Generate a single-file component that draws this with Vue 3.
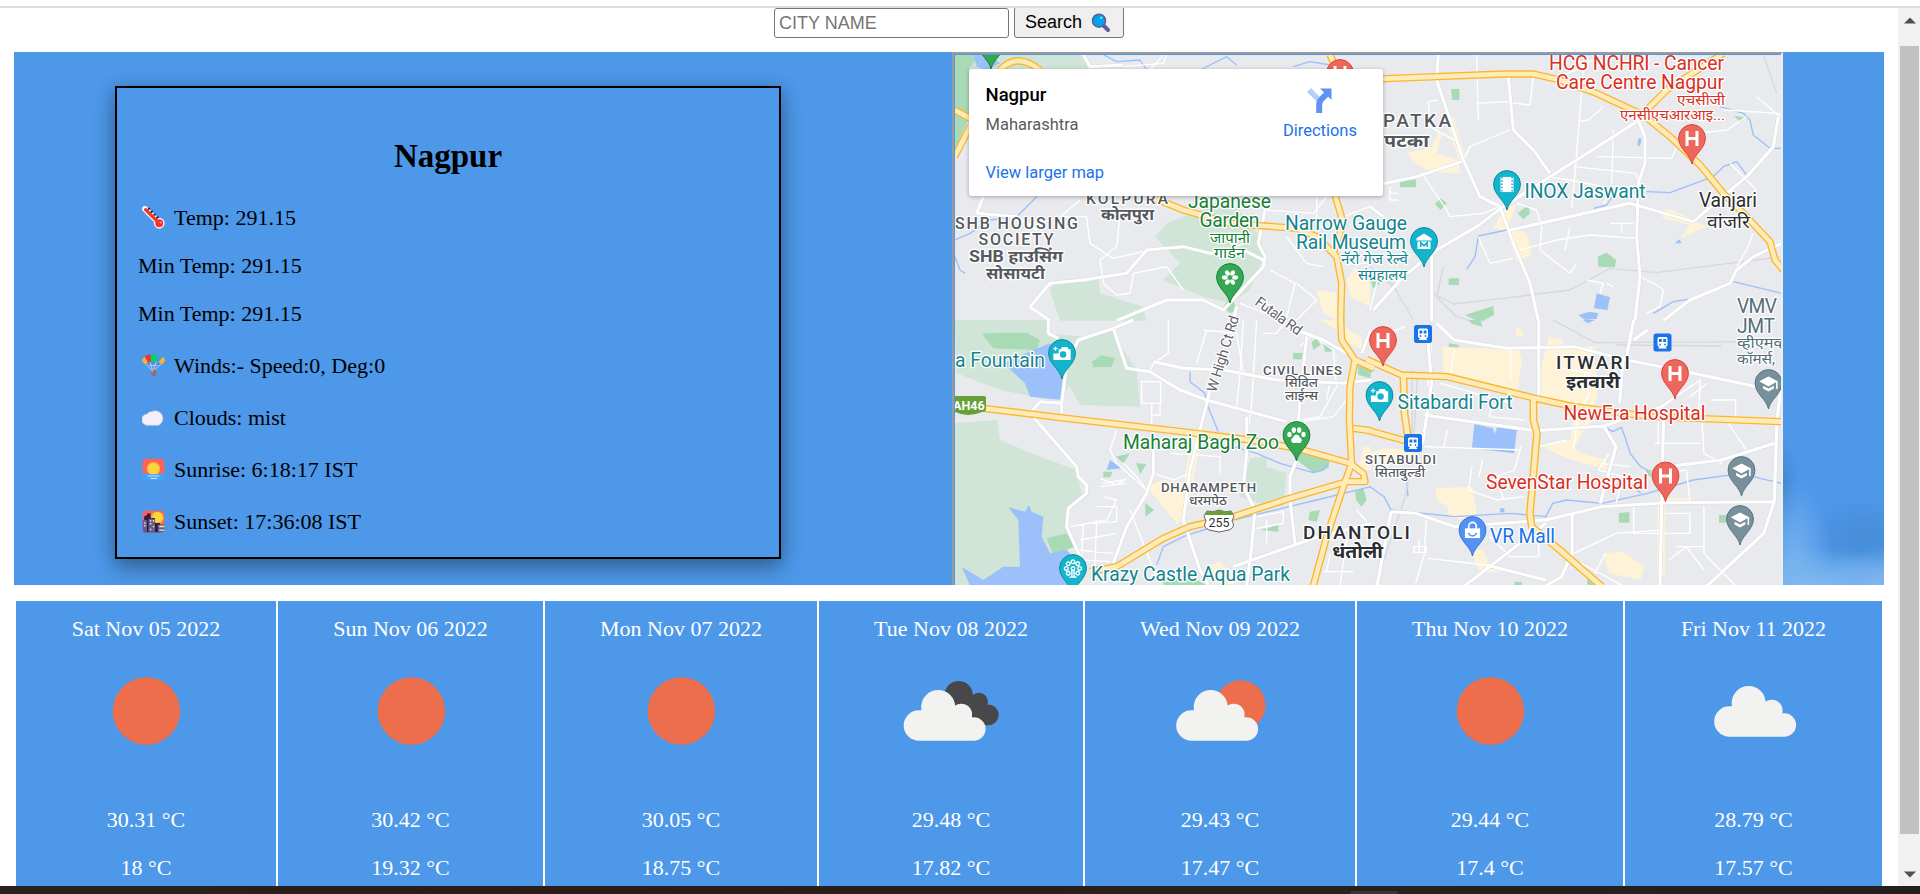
<script setup>
const days = [
  { date: 'Sat Nov 05 2022', icon: 'sun', max: '30.31', min: '18' },
  { date: 'Sun Nov 06 2022', icon: 'sun', max: '30.42', min: '19.32' },
  { date: 'Mon Nov 07 2022', icon: 'sun', max: '30.05', min: '18.75' },
  { date: 'Tue Nov 08 2022', icon: 'broken', max: '29.48', min: '17.82' },
  { date: 'Wed Nov 09 2022', icon: 'partly', max: '29.43', min: '17.47' },
  { date: 'Thu Nov 10 2022', icon: 'sun', max: '29.44', min: '17.4' },
  { date: 'Fri Nov 11 2022', icon: 'cloud', max: '28.79', min: '17.57' },
]

const disc = (x, y, r) => `M${x - r} ${y}a${r} ${r} 0 1 1 ${2 * r} 0a${r} ${r} 0 1 1 ${-2 * r} 0Z`
const cloudPath = disc(18, 64.5, 15.3) + disc(37.2, 46, 17) + disc(60.3, 53.5, 10.8) + disc(72.8, 68, 11.8) + 'M18 50L30 45 60 45 75 60V79.8H18Z'
const darkPath = disc(57.7, 34, 14) + disc(78, 40.8, 9) + disc(87.3, 53.8, 10.4) + 'M50 40L65 25 82 45 88 64 75 62Z'

/* Each map tile keeps its own local coordinates. */
const tiles = [
  {
    t: 'translate(950 50) scale(.33333)',
    park: 'M14 14H405L415 60H60V210L14 320ZM615 560L650 520 750 480 860 470 930 560 940 620 900 720 840 760 760 740 640 690 690 640ZM300 720L320 690 445 685 450 730 580 770 588 812H330Z',
    dark: 'M14 14H90L57 57V200L14 300ZM820 770L845 735 860 780 840 790Z',
    built: 'M1100 720L1160 730 1160 810 1120 790ZM1190 690L1215 650 1260 700V770L1200 740Z',
    water: 'M70 14H120L150 40 110 60 80 50Z',
    stream: 'M15 570L60 550 120 510 200 500 260 440M15 620L30 660 45 670M460 14L500 35 570 30 590 60M750 60L830 20 860 45M1030 50L1080 35 1140 45',
    rail: '',
    minor: 'M490 440L510 500 500 590 450 630 460 700 500 735 540 730 550 670 650 650 700 720M410 500L420 580 490 625 600 600M840 600L880 580 880 560M960 660L1035 700 1010 800M945 480L1090 490 1130 440M1010 560L1070 640 1120 650M520 50L640 40 650 14M600 60L640 14M1100 440V530L1180 535M1180 500L1260 470M1190 640L1260 640M390 450L330 500 410 500M1040 700L1100 750 1040 810M870 760L1000 810',
    road: 'M80 490L100 440M80 490L200 500 260 540M240 770L300 700 400 690 530 670 590 600 700 590 780 610 880 600 940 630M240 770L300 812M500 812L650 750 760 750 820 780 940 650 945 620 925 580 945 480 940 440M400 14L420 50 520 45M860 770L850 812',
    high: 'M14 180L60 205M14 320L60 230M150 60Q200 5 270 60M600 440L700 480 840 520 1040 535 1100 560 1160 620 1175 700 1172 816M1155 435L1180 520 1150 610M1140 14L1160 60',
  },
  {
    t: 'translate(1370 50) scale(.33333)',
    park: '',
    dark: 'M243 117H268V150H247ZM90 392L138 388V412H90ZM195 462L212 445 230 460 212 480ZM443 490L475 465 480 490 460 508ZM683 620L710 608 738 630 735 652 685 650ZM236 685H267V705H236ZM285 795L370 768 372 795 340 812H320ZM1092 197L1130 203 1110 217ZM0 690L20 690 30 700 10 715Z',
    built: 'M112 310L185 290 205 245 215 255 200 310 265 330 270 370 180 365 130 335ZM370 535L400 480 440 460 415 530 470 550 485 615 440 635 412 545ZM865 480L905 478 1010 530 990 540 930 565 960 525 880 505ZM228 210L250 200 290 330 270 340Z',
    water: 'M680 730L720 742 712 780 672 775ZM625 795L660 785 685 790 680 806 645 810ZM805 265L815 267 810 288 802 285ZM915 580L928 568 935 580Z',
    stream: 'M1050 170L1120 190 1140 210 1150 255 1200 295H1235M1200 295L1170 335M830 425L900 428 1030 380 1060 350 1100 335 1130 375M325 558L410 540M325 560L315 620 290 658M1090 695L1235 730M850 790L910 755 970 745M670 475L710 465 730 435',
    rail: 'M190 730L250 762 400 745 600 720 720 655 860 668 1235 620M220 650L200 740 260 800 300 812M60 690L130 810M1180 14L1220 130M0 650L80 720',
    minor: 'M320 14L325 210M320 160L400 155 480 165 490 80M540 90L620 60 690 14M640 60L620 310 605 475M625 215L655 210 700 170M680 320L905 325 920 290M730 240L725 400M610 350L800 370 805 400M155 370L230 480 240 500 340 490 390 470M205 150L175 155 180 230 270 280M280 330L300 290 420 240M530 380L600 390 700 410M440 460L500 480 515 530 510 600 600 670 620 640M700 460L720 430 830 440M720 520H790M755 520V550M450 600L560 570 660 555 800 565M325 560L360 640 430 625M60 410V450H85M60 430H85M600 530L585 600M1060 180L1230 190M1160 140L1230 200M1080 340L1160 420M980 250L1070 240 1130 200M810 680L860 705 880 720 870 770 830 790M650 690L700 700 690 730M730 710L710 700M1100 650L1130 600 1150 550M30 660L0 780',
    road: 'M205 14L200 90 240 210 280 330 330 440 390 470 430 580 480 700 505 812M-10 412L140 380 275 335M415 80L430 240 490 300 540 370M400 470L540 380 800 215M400 470L320 530 200 600 100 680 10 780M800 200L825 260 825 340 805 400 800 560 810 680 795 812M420 540L780 460 970 515 1130 380 1210 290 1225 200M1235 580L1150 620 1100 660 1080 700 960 750 880 812M185 600V812M0 470L40 500',
    high: 'M-10 88L200 80 400 72 490 72 570 90 680 130 820 195 900 260 990 345 1060 430 1120 490 1200 575 1215 630 1240 660M830 180L890 120 1060 10',
  },
  {
    t: 'translate(950 320) scale(.33333)',
    park: 'M14 0H300L290 40 400 50 490 20 520 90 560 150 570 260 390 255 360 200 300 240 150 210 20 160ZM14 310L140 300 150 360 270 410 380 450 390 500 400 530 350 570 350 700 330 795H14ZM900 415L950 410 950 440 1010 460 1000 560 930 550 870 530Z',
    dark: 'M95 40L230 38 270 60 260 90 130 85ZM425 125L455 105 495 115 485 140 430 142ZM290 655L350 640 375 680 310 705ZM1040 420L1060 385 1140 410 1135 445 1090 458ZM1222 120H1262V175L1225 165ZM498 410L540 400 520 430ZM558 430L590 432 570 462ZM585 548L612 570 587 590ZM460 455H488L480 472H460ZM930 630L985 615V635ZM1080 575L1110 570 1100 605 1075 600ZM1215 515L1240 505 1250 540 1235 560 1218 540ZM1085 65L1100 55 1112 75 1090 90ZM1120 70L1142 65 1145 95 1125 95ZM1028 100L1058 98 1055 118H1030ZM640 785L720 770 770 795H640Z',
    built: 'M590 500L640 480 700 490 720 380 735 330 745 400 725 510 700 600 680 610ZM1110 0H1160V30ZM1180 20L1235 50V90L1180 60ZM780 735L810 725 830 745 870 760 850 795 780 780ZM1240 380H1262V450H1225Z',
    water: 'M160 130L250 90 300 70 350 170 335 240 240 230 225 190ZM175 562L225 575 237 555 245 575 280 590 275 650 300 700 350 690 400 740 370 797H60L35 740 100 780 160 740 210 740 205 600ZM480 420L515 445 470 450Z',
    stream: 'M720 155V185L765 220 770 250 805 335M850 380L920 400 990 430 1090 458 1120 450 1135 430M1262 500L1100 540 850 600 700 650 640 680 620 735',
    rail: '',
    minor: 'M500 330L480 390 500 430 590 510M590 510L560 470 520 430M610 460L670 480 720 460M660 400L810 410V460M540 570L615 760M575 185H632V250H575ZM605 250V330M630 250V285H605M655 0V100L610 130 600 155M770 30L740 130M760 30L860 40 880 160M880 0L870 160 860 260M920 0L905 250 885 390M940 40H980L1010 0M360 620L470 600 500 540 460 530M390 660L500 640M380 690L490 700M390 720L480 725M400 610L395 720M440 600L435 735M450 475L500 495 530 475M460 490L520 480M450 500L530 490M1080 40L1150 90 1160 200 1110 290 1020 305M1140 180L1130 240M1080 50L1050 80M1020 310L1150 290 1190 240M920 590L1000 575V610L920 625M950 600V670M1120 755H1210M1140 700L1130 755M1190 660L1170 795M1220 570L1262 620M440 560H500V605L430 610',
    road: 'M240 280L380 440 385 470 410 495 410 520 355 565 350 620 390 710M240 280L270 245 335 250 350 130 385 60 490 25 550 0M335 250V280M490 25L530 145 600 155 690 210 770 240 880 270 1010 305M295 0V40L325 55M780 210L750 330 720 450 700 600 750 750 775 795M610 125L700 145 820 150 980 180 1180 190 1262 180M610 330V460L590 520 530 620 490 730M890 290V400L880 500 915 570 905 680 890 795M1040 420L1020 470V540L1035 670M850 740L1090 655 1262 610M1070 50L1050 240 1045 310M1040 30L1120 60 1190 100M1262 30L1235 100',
    high: 'M100 265L350 295 740 340 900 360 1040 385 1200 430 1240 460 1245 485 1190 485 1020 535 850 590 720 620 640 655 500 740 420 755M1172 -6L1175 60 1215 120 1200 200 1198 300 1205 430 1180 500 1130 650 1090 797M1215 120L1272 145M1210 325L1262 332',
  },
  {
    t: 'translate(1370 320) scale(.3515 .33333)',
    park: '',
    dark: 'M225 70L253 75 248 107 222 102ZM490 195L526 196 522 232 488 228ZM708 579L738 576V608H708ZM993 585H1018V608H993ZM280 0H315L320 20 290 12ZM0 140L15 150 0 160ZM785 450H800V470L785 462ZM410 785H432V797H412ZM618 775L650 797H618Z',
    built: 'M205 80L425 90 432 120 420 215 210 160ZM508 50L550 60 545 80H640V150L655 180 630 300 580 380 600 400 670 420 675 450 560 415 490 380 570 360 580 270 480 230 485 150ZM185 505L290 500 305 580 270 600 225 590 220 560 190 540ZM665 700L720 695 780 740 770 780 680 760ZM285 690L320 690 345 740 400 750 315 760ZM818 560H840V765H818ZM835 535H915V545H835ZM0 400L40 385 130 390 100 430H0ZM415 30L425 20 440 45 415 50Z',
    water: 'M297 312L350 325 355 342 362 320 418 330 410 400 290 385ZM370 565H382V577H370ZM605 0H640L620 10Z',
    stream: 'M0 500L40 530 60 570 240 590 400 580 500 590 520 550 560 540 660 550 790 520 920 480 1060 460 1110 475 1170 490M670 322L690 335 715 322 725 350 740 400 770 440 790 450M105 485L108 530M720 470L770 520',
    rail: 'M120 150V360M135 160L125 350M110 480L100 530 15 797M520 0L640 68 1170 65M700 75L1000 78',
    minor: 'M175 60L165 200M200 190L400 250M345 250L340 290 440 300M240 90L230 160M0 60L100 20M400 90V180M530 140L620 160M630 80L620 230 590 290 580 390M870 230L940 180 935 270M970 240H1040V310M920 290H820V370H830M945 310L950 400 1000 430M1020 310L1070 390M680 400L650 450 720 470 700 550M810 370H940M840 460L900 450 910 540M840 580H910V640H840M750 560V640H830M950 560V700L1040 797M870 680H950M850 720L900 680 950 750M480 630V710H400L340 650M160 600L155 700 130 790M125 680H160V697H125ZM140 660V697M165 715L330 735M290 440L280 510 360 540 440 530M155 380L430 390M320 420L310 470M220 330L210 380M430 380L410 450 360 470 380 540M560 360L480 380M660 430L740 440M580 700L700 640 830 630M600 730L720 797M670 700L640 760M960 190L910 230',
    road: 'M155 285L470 332 665 318 830 260 870 230M190 10L240 60 390 85 580 80 730 120 900 155 1100 200M480 0V230M60 575L130 580 240 620 500 600 660 560 840 548 1150 545 1158 300 1175 150M1150 545L1120 640 960 797M835 300L825 797M665 318L700 380 655 550M270 797L500 610M330 735L500 780M500 797L545 770 575 700V580M750 0L730 110M790 30L750 60M720 110L710 250M840 440L1000 420 1150 370M165 60L175 190 150 370M20 797L60 575',
    high: 'M-10 118L90 165 220 170 470 235 580 260 800 290 1175 305M95 165L98 280 108 350M-10 330L100 362M465 235V300L475 340 455 580 460 620 540 690 660 800',
  },
]

/* [text, x, baseline, width, size, colour class] */
const labels = [
  ['INOX Jaswant', 1524.5, 197.5, 121, 19.3, 'teal'],
  ['Narrow Gauge', 1285, 230, 122, 19.3, 'teal'],
  ['Rail Museum', 1296, 249, 110, 19.3, 'teal'],
  ['नॅरो गेज रेल्वे', 1341, 264, 67, 14.5, 'teal'],
  ['संग्रहालय', 1358, 279.5, 49, 14.5, 'teal'],
  ['a Fountain', 955, 366.5, 90, 19.3, 'teal'],
  ['Krazy Castle Aqua Park', 1091, 581, 199, 19.3, 'teal'],
  ['Sitabardi Fort', 1397.5, 408.5, 115, 19.3, 'teal'],
  ['Japanese', 1188, 208, 83, 19.3, 'green'],
  ['Garden', 1199.5, 227, 60, 19.3, 'green'],
  ['जापानी', 1210, 242.5, 40, 14.5, 'green'],
  ['गार्डन', 1214, 257.5, 31, 14.5, 'green'],
  ['Maharaj Bagh Zoo', 1123, 449, 156, 19.3, 'green'],
  ['HCG NCHRI - Cancer', 1549, 69.5, 175, 19.3, 'red'],
  ['Care Centre Nagpur', 1556, 89, 168, 19.3, 'red'],
  ['एचसीजी', 1677, 104.5, 48, 15, 'red'],
  ['एनसीएचआरआइ...', 1620, 119.5, 105, 15, 'red'],
  ['NewEra Hospital', 1563.5, 419.5, 142, 19.3, 'red'],
  ['SevenStar Hospital', 1486, 489, 162, 19.3, 'red'],
  ['VR Mall', 1490, 542.5, 65, 19.3, 'blue'],
  ['KOLPURA', 1086, 203.5, 82, 15.5, 'area'],
  ['कोलपुरा', 1101, 220, 53, 16, 'area bold'],
  ['SHB HOUSING', 955, 229, 123, 16, 'area'],
  ['SOCIETY', 978.5, 245, 75, 16, 'area'],
  ['SHB हाउसिंग', 969, 261.5, 94, 16, 'area bold'],
  ['सोसायटी', 986, 278.5, 59, 16, 'area bold'],
  ['PATKA', 1383, 127, 68, 19, 'area'],
  ['पटका', 1384, 147, 45, 18, 'area bold'],
  ['Vanjari', 1699, 207, 58, 19.3, 'dark'],
  ['वांजरि', 1707, 227.5, 43, 18, 'dark'],
  ['VMV', 1737, 312.5, 40, 19.3, 'slate'],
  ['JMT', 1737, 333, 38, 19.3, 'slate'],
  ['व्हीएमव्ह', 1737, 348, 50, 15, 'slate'],
  ['कॉमर्स,', 1737, 363.5, 38, 15, 'slate'],
  ['ITWARI', 1556, 369, 74, 19, 'area dark'],
  ['इतवारी', 1566, 388, 54, 18, 'area dark bold'],
  ['CIVIL LINES', 1263, 374.5, 79, 13.2, 'area'],
  ['सिविल', 1285, 387, 33, 12.5, 'area'],
  ['लाईन्स', 1285, 399.5, 33, 12.5, 'area'],
  ['DHARAMPETH', 1161, 492, 95, 13.2, 'area'],
  ['धरमपेठ', 1189, 504.5, 38, 12.5, 'area'],
  ['DHANTOLI', 1303, 538.5, 107, 19, 'area dark'],
  ['धंतोली', 1332, 558, 51, 18, 'area dark bold'],
  ['SITABULDI', 1365, 464, 71, 13.2, 'area'],
  ['सिताबुल्डी', 1375, 476.5, 50, 12.5, 'area'],
]
const isDevanagari = s => /[\u0900-\u097f]/.test(s)

/* x and y are the tip of each marker */
const pins = [
  { x: 991, y: 69, c: '#34a853', e: '#188038', g: '' },
  { x: 1230, y: 303, c: '#34a853', e: '#188038', g: 'flower' },
  { x: 1296.5, y: 461, c: '#34a853', e: '#188038', g: 'paw' },
  { x: 1424, y: 267, c: '#12b5cb', e: '#0d8a9c', g: 'museum' },
  { x: 1507, y: 210, c: '#12b5cb', e: '#0d8a9c', g: 'film' },
  { x: 1062, y: 379, c: '#12b5cb', e: '#0d8a9c', g: 'camera' },
  { x: 1379.5, y: 421, c: '#12b5cb', e: '#0d8a9c', g: 'camera' },
  { x: 1073, y: 594, c: '#12b5cb', e: '#0d8a9c', g: 'wheel' },
  { x: 1340, y: 99, c: '#ee675c', e: '#d9453a', g: 'hospital' },
  { x: 1692, y: 164, c: '#ee675c', e: '#d9453a', g: 'hospital' },
  { x: 1383, y: 366, c: '#ee675c', e: '#d9453a', g: 'hospital' },
  { x: 1675, y: 399, c: '#ee675c', e: '#d9453a', g: 'hospital' },
  { x: 1665.5, y: 501.5, c: '#ee675c', e: '#d9453a', g: 'hospital' },
  { x: 1768.5, y: 409, c: '#78909c', e: '#5c7480', g: 'school' },
  { x: 1741.5, y: 496, c: '#78909c', e: '#5c7480', g: 'school' },
  { x: 1740, y: 545, c: '#78909c', e: '#5c7480', g: 'school' },
  { x: 1472.5, y: 556, c: '#5491f5', e: '#3574dd', g: 'bag' },
]
const stations = [[1423, 334], [1662.5, 342.5], [1413, 443]]
</script>

<template>
  <div class="window">
    <div class="topline"></div>
    <div class="viewport">
      <main class="page">
        <form class="search" @submit.prevent>
          <input type="text" placeholder="CITY NAME" />
          <button type="submit">
            <span>Search</span>
            <svg width="20" height="20" viewBox="0 0 20 20">
              <path d="M12.5 12.5L17 17" stroke="#635994" stroke-width="4" stroke-linecap="round" />
              <circle cx="8" cy="7.7" r="6.5" fill="#00a6ed" stroke="#635994" stroke-width="1.5" />
              <circle cx="10.2" cy="4.8" r="1.1" fill="#aee5ff" />
            </svg>
          </button>
        </form>

        <section class="hero">
          <article class="current">
            <h2>Nagpur</h2>
            <p>
              <svg class="emoji" viewBox="0 0 32 32">
                <path d="M4 4L23 23" stroke="#f4f4f4" stroke-width="8" stroke-linecap="round" />
                <circle cx="24" cy="24" r="7.5" fill="#f4f4f4" />
                <path d="M5 5L22 22" stroke="#f8312f" stroke-width="4.5" stroke-linecap="round" />
                <circle cx="24" cy="24" r="5.5" fill="#f8312f" />
                <path d="M8 5l3-2M12 9l3-2M16 13l3-2M20 17l3-2" stroke="#222" stroke-width="2.2" />
                <circle cx="26" cy="23" r="1.6" fill="#ff8a8a" />
              </svg>
              <span>Temp: 291.15</span>
            </p>
            <p>Min Temp: 291.15</p>
            <p>Min Temp: 291.15</p>
            <p class="wide">
              <svg class="emoji" viewBox="0 0 32 32">
                <path d="M3 12L15 24 29 12M11 10L15 24 20 10M10 16h11" stroke="#d9d6e8" stroke-width="1.1" fill="none" />
                <path d="M0 9Q1 5 4 4L9 10 5 14Q1 13 0 9Z" fill="#ffb02e" />
                <path d="M32 9Q32 5 29 4L23 11 27 14Q31 13 32 9Z" fill="#ffb02e" />
                <path d="M4 4Q8 0 13 1L12 12 8 11Z" fill="#f8312f" />
                <path d="M12 2Q17-1 22 3L20 11Q15 13 12 10Z" fill="#00d26a" />
                <path d="M15 22l4 3-4 3 4 3M13 27h6" stroke="#b55a50" stroke-width="2.3" fill="none" />
              </svg>
              <span>Winds:- Speed:0, Deg:0</span>
            </p>
            <p class="wide">
              <svg class="emoji" viewBox="0 0 32 32">
                <path d="M8 27a8 8 0 0 1-1-16Q9 7.5 14 7.5a9.6 9.6 0 1 1 9 19.5Z" fill="#f4eef8" stroke="#b9b2c9" stroke-width="1" />
              </svg>
              <span>Clouds: mist</span>
            </p>
            <p class="wide">
              <svg class="emoji" viewBox="0 0 32 32">
                <path d="M1 22V5Q1 1 5 1H27Q31 1 31 5V22Z" fill="#ff6159" />
                <path d="M1 22H31V27Q31 31 27 31H5Q1 31 1 27Z" fill="#46a4fb" />
                <circle cx="16" cy="15" r="9.5" fill="#ffb02e" />
                <circle cx="16" cy="15" r="8" fill="#fcd53f" />
                <path d="M1 22.5H31V25H1Z" fill="#46a4fb" />
                <path d="M8 25H24M12 28.5H21" stroke="#c8e8ff" stroke-width="1.4" />
              </svg>
              <span>Sunrise: 6:18:17 IST</span>
            </p>
            <p class="wide">
              <svg class="emoji" viewBox="0 0 32 32">
                <rect x="1" y="1" width="30" height="30" rx="4" fill="#ff6159" />
                <circle cx="21" cy="11" r="9" fill="#ffb02e" />
                <circle cx="22" cy="10" r="7" fill="#fcd53f" />
                <path d="M3 9L7 7V5H12V11H18V18H25V31H3Z" fill="#321b41" />
                <path d="M1 14H7V31H5Q1 31 1 27ZM9 12H18V31H9ZM22 20H31V27Q31 31 27 31H22Z" fill="#635994" />
                <path d="M11 15h2M15 15h2M11 19h2M15 23h2M11 27h2M3 18h2M3 22h2M24 23h7M24 28h7" stroke="#ffee91" stroke-width="2" />
              </svg>
              <span>Sunset: 17:36:08 IST</span>
            </p>
          </article>

          <div class="map">
            <svg class="canvas" viewBox="955 55 825.5 530" width="825.5" height="530">
              <rect x="955" y="55" width="826" height="530" fill="#e8eaed" />
              <g v-for="(t, i) in tiles" :key="'a' + i" :transform="t.t">
                <path :d="t.park" fill="#d0e5d8" />
                <path :d="t.dark" fill="#a8dab5" />
                <path :d="t.built" fill="#fef3d6" />
                <path :d="t.water" fill="#9cc0f9" />
                <path :d="t.stream" class="line stream" />
                <path :d="t.rail" class="line rail" />
                <path :d="t.minor" class="line minor" />
              </g>
              <g v-for="(t, i) in tiles" :key="'b' + i" :transform="t.t">
                <path :d="t.road" class="line road-edge" />
                <path :d="t.road" class="line road" />
              </g>
              <g v-for="(t, i) in tiles" :key="'c' + i" :transform="t.t">
                <path :d="t.high" class="line high-edge" />
              </g>
              <g v-for="(t, i) in tiles" :key="'d' + i" :transform="t.t">
                <path :d="t.high" class="line high" />
              </g>

              <path d="M955 396H984Q986 396 986 398V409Q986 412 982 412Q968 418 955 412Z" fill="#689f38" />
              <text x="953" y="410" class="shield-text" fill="#fff" font-size="12.5" font-weight="700">AH46</text>
              <path d="M1207 511Q1213 513 1219 510 1226 513 1231 511L1234 516 1232 521Q1236 527 1229 530L1219 532 1209 530Q1202 527 1206 521L1204 516Z" fill="#fff" stroke="#666" stroke-width="1" />
              <path d="M1207 511Q1213 513 1219 510 1226 513 1231 511L1233 515H1205Z" fill="#689f38" />
              <text x="1208.5" y="527" class="shield-text" fill="#333" font-size="12.5">255</text>

              <text
                v-for="(l, i) in labels"
                :key="'l' + i"
                :x="l[1]"
                :y="l[2]"
                :textLength="l[3]"
                :lengthAdjust="isDevanagari(l[0]) ? 'spacingAndGlyphs' : 'spacing'"
                :font-size="l[4]"
                :class="['label', l[5]]"
              >{{ l[0] }}</text>
              <text class="label street" transform="translate(1216 393) rotate(-73)" font-size="14.5" textLength="79">W High Ct Rd</text>
              <text class="label street" transform="translate(1254 304) rotate(36)" font-size="14.5" textLength="54">Futala Rd</text>

              <g v-for="(s, i) in stations" :key="'s' + i" :transform="`translate(${s[0]} ${s[1]})`">
                <rect x="-9" y="-9" width="18" height="18" rx="2.5" fill="#1a73e8" />
                <path d="M-3.5-5.5H3.5Q5-5.5 5-4V2.5Q5 4 3 4L4.5 6H-4.5L-3 4Q-5 4-5 2.5V-4Q-5-5.5-3.5-5.5Z" fill="#fff" />
                <path d="M-3.5-3.5H-.7V-.5H-3.5ZM.7-3.5H3.5V-.5H.7Z" fill="#1a73e8" />
                <circle cx="-2.5" cy="2" r=".9" fill="#1a73e8" /><circle cx="2.5" cy="2" r=".9" fill="#1a73e8" />
              </g>

              <g v-for="(p, i) in pins" :key="'p' + i" :transform="`translate(${p.x} ${p.y})`">
                <path d="M0 0C-2-10-13.4-15-13.4-26A13.4 13.4 0 0 1 13.4-26C13.4-15 2-10 0 0Z" :fill="p.c" :stroke="p.e" stroke-width="1" />
                <g transform="translate(0 -25.5) scale(1.08)" fill="#fff">
                  <path v-if="p.g === 'hospital'" d="M-6-7H-3.2V-1.5H3.2V-7H6V7H3.2V1.3H-3.2V7H-6Z" />
                  <g v-else-if="p.g === 'flower'">
                    <ellipse v-for="n in 6" :key="n" cx="0" cy="-4.8" rx="2" ry="2.7" :transform="`rotate(${n * 60 + 30})`" />
                  </g>
                  <g v-else-if="p.g === 'paw'">
                    <ellipse cx="-6.5" cy="-1" rx="2" ry="2.5" /><ellipse cx="-2.5" cy="-5" rx="2" ry="2.6" />
                    <ellipse cx="2.5" cy="-5" rx="2" ry="2.6" /><ellipse cx="6.5" cy="-1" rx="2" ry="2.5" />
                    <path d="M0-1Q2-1 3.5 2 6 4 4 6.5 2 7.5 0 6.5-2 7.5-4 6.5-6 4-3.5 2-2-1 0-1Z" />
                  </g>
                  <g v-else-if="p.g === 'museum'">
                    <path d="M-7-3L0-7.5 7-3V-1H-7ZM-6 0H6V7H-6Z" />
                    <path d="M-3 5V1L0 4 3 1V5" fill="none" stroke="#12b5cb" stroke-width="1.5" />
                  </g>
                  <g v-else-if="p.g === 'film'">
                    <path d="M-6-7H6V7H-6Z" />
                    <path d="M-4.7-7V7M4.7-7V7" stroke="#12b5cb" stroke-width="1.4" stroke-dasharray="1.5 1.5" />
                  </g>
                  <g v-else-if="p.g === 'camera'">
                    <path d="M-3-4H-1L0-6H5L6-4H8V6H-8V0H-3Z" />
                    <circle cx="1" cy="1" r="3" fill="#12b5cb" />
                    <path d="M-8-4.5H-4M-6-6.5V-2.5" stroke="#fff" stroke-width="1.2" />
                  </g>
                  <g v-else-if="p.g === 'wheel'" fill="none" stroke="#fff" stroke-width="1.3">
                    <circle v-for="n in 7" :key="n" cx="0" cy="-6.2" r="1.7" :transform="`rotate(${n * 45 - 180})`" />
                    <circle r="1.6" />
                    <path d="M-1 1V8M1 1V8M-3.5 8H3.5" />
                  </g>
                  <g v-else-if="p.g === 'school'">
                    <path d="M-8.5-2L0-6.5 8.5-2 0 2.7ZM-5 2L0 4.7 5 2V4.7L0 7.5-5 4.7ZM7-2H8.5V5H7Z" />
                  </g>
                  <g v-else-if="p.g === 'bag'">
                    <path d="M-7-2H7V7H-7Z" />
                    <path d="M-3.5-1V-4A3.5 3.5 0 0 1 3.5-4V-1" fill="none" stroke="#fff" stroke-width="1.5" />
                    <path d="M-3.5 2A3.5 3 0 0 0 3.5 2" fill="none" stroke="#5491f5" stroke-width="1.5" />
                  </g>
                </g>
              </g>
            </svg>

            <div class="place">
              <div class="place-text">
                <strong>Nagpur</strong>
                <span class="region">Maharashtra</span>
                <a class="larger">View larger map</a>
              </div>
              <a class="directions">
                <svg width="25" height="25" viewBox="0 0 25 25">
                  <path d="M2 2L12 12" stroke="#b5cffb" stroke-width="5.5" />
                  <path d="M12.2 25V17Q12.2 13.5 14.5 11.2L20 5.7" fill="none" stroke="#5f92f7" stroke-width="6" />
                  <path d="M13 .5H24.5V12Z" fill="#5f92f7" />
                </svg>
                <span>Directions</span>
              </a>
            </div>
          </div>
        </section>

        <section class="forecast">
          <article v-for="d in days" :key="d.date" class="day">
            <p class="date">{{ d.date }}</p>
            <svg class="weather" width="100" height="100" viewBox="0 0 100 100">
              <circle v-if="d.icon === 'sun'" cx="50.4" cy="50" r="33.7" fill="#ec6e4c" />
              <g v-else-if="d.icon === 'broken'">
                <path :d="darkPath" fill="#48484a" />
                <path :d="cloudPath" fill="#f2f2f0" />
              </g>
              <g v-else-if="d.icon === 'partly'">
                <circle cx="70.5" cy="44.3" r="25" fill="#ec6e4c" />
                <path :d="cloudPath" transform="translate(3.5 0)" fill="#f2f2f0" />
              </g>
              <path v-else :d="cloudPath" transform="translate(7.5 -4)" fill="#f2f2f0" />
            </svg>
            <p class="temp">{{ d.max }} °C</p>
            <p class="temp">{{ d.min }} °C</p>
          </article>
        </section>
      </main>
      <div class="scrollbar">
        <svg width="12" height="7" viewBox="0 0 12 7"><path d="M0 6.5L6 .5 12 6.5Z" fill="#505050" /></svg>
        <div class="thumb"></div>
        <svg width="12" height="7" viewBox="0 0 12 7"><path d="M0 .5L6 6.5 12 .5Z" fill="#505050" /></svg>
      </div>
    </div>
    <div class="taskbar"><i></i></div>
  </div>
</template>

<style>
body { overflow: hidden; }
</style>

<style scoped>
* { box-sizing: border-box; }
p, h2 { margin: 0; }
.window {
  width: 1920px;
  height: 894px;
  background: #fff;
  overflow: hidden;
  font-family: "Liberation Serif", "Times New Roman", serif;
  font-size: 22px;
  color: #000;
}
.topline { height: 8px; border-bottom: 2px solid #ddd; }
.viewport { display: flex; height: 878px; }
.page { width: 1898px; height: 878px; overflow: hidden; }
.search { display: flex; justify-content: center; gap: 5px; height: 44px; }
.search input {
  width: 235px;
  height: 30px;
  padding: 0 4px;
  border: 1px solid #767676;
  border-radius: 3px;
  font: 18px "Liberation Sans", Arial, sans-serif;
}
.search input::placeholder { color: #757575; opacity: 1; }
.search button {
  display: flex;
  align-items: center;
  justify-content: space-between;
  width: 110px;
  height: 32px;
  margin-top: -2px;
  padding: 1px 12px 0 10px;
  border: 1px solid #767676;
  border-radius: 3px;
  background: #efefef;
  font: 18px "Liberation Sans", Arial, sans-serif;
  clip-path: inset(2px 0 0 0);
}
.hero {
  display: flex;
  width: 1870px;
  height: 533px;
  margin-left: 14px;
  overflow: hidden;
  background:
    radial-gradient(ellipse 95px 42px at 1800px 537px, rgba(126, 184, 240, 0.95) 20%, transparent 100%),
    radial-gradient(ellipse 38px 80px at 1780px 508px, rgba(120, 178, 238, 0.85) 10%, transparent 100%),
    radial-gradient(ellipse 80px 40px at 1880px 535px, rgba(130, 182, 236, 0.95) 20%, transparent 100%),
    radial-gradient(ellipse 60px 42px at 1848px 486px, #478dd8 10%, transparent 100%),
    radial-gradient(ellipse 16px 50px at 1768px 435px, #4486d0 0%, transparent 100%),
    #4d98e9;
}
.current {
  width: 666px;
  height: 473px;
  margin: 34px 0 0 101px;
  padding: 0 21px;
  border: 2px solid #000;
  box-shadow: 0 10px 20px rgba(0, 0, 0, 0.26), 0 2px 18px rgba(0, 0, 0, 0.2);
}
.current h2 { margin: 49px 0 29px; text-align: center; font-size: 33px; line-height: 38px; }
.current p { display: flex; align-items: center; height: 28px; margin-bottom: 20px; line-height: 28px; white-space: nowrap; }
.current p + p.wide { margin-top: 24px; }
.current p.wide { margin-bottom: 0; }
.emoji { width: 23px; height: 23px; margin: -2px 9px 0 4px; }
.map {
  position: relative;
  width: 831px;
  height: 545px;
  margin-left: 171px;
  border: 2px solid #9a9a9a;
  border-right-color: #eee;
  padding: 1px;
  background: #4d98e9;
}
.canvas { display: block; }
.line { fill: none; stroke-linejoin: round; }
.stream { stroke: #9cc0f9; stroke-width: 4; }
.rail { stroke: #d6d8db; stroke-width: 4; }
.minor { stroke: #fff; stroke-width: 4; }
.road-edge { stroke: #dadce0; stroke-width: 12; }
.road { stroke: #fff; stroke-width: 9; }
.high-edge { stroke: #fab72d; stroke-width: 22; }
.high { stroke: #ffebba; stroke-width: 14; }
.label {
  font-family: Roboto, "Noto Sans", "Noto Sans Devanagari", sans-serif;
  paint-order: stroke;
  stroke: #fff;
  stroke-width: 2.6px;
  stroke-linejoin: round;
}
.shield-text { font-family: Roboto, sans-serif; }
.teal { fill: #12858f; }
.green { fill: #188038; }
.red { fill: #d93025; }
.blue { fill: #1a73e8; }
.slate { fill: #546e7a; }
.area { fill: #55595e; font-weight: 500; }
.dark { fill: #2b2e31; }
.bold { font-weight: 700; }
.street { fill: #5f6368; }
.place {
  position: absolute;
  left: 15px;
  top: 15px;
  display: flex;
  justify-content: space-between;
  width: 414px;
  height: 127px;
  padding: 0 26px 0 16.5px;
  border-radius: 3px;
  background: #fff;
  box-shadow: 0 1px 4px rgba(0, 0, 0, 0.3);
  font: 16.5px Roboto, sans-serif;
  white-space: nowrap;
}
.place-text { display: flex; flex-direction: column; }
.place strong { margin-top: 14px; font-size: 18.5px; font-weight: 500; line-height: 24px; }
.region { margin-top: 8px; color: #5b5b5b; line-height: 20px; }
.larger { margin-top: 28px; color: #1a73e8; line-height: 20px; }
.directions { display: flex; flex-direction: column; align-items: center; padding-top: 19px; color: #1a73e8; }
.directions span { margin-top: 8px; line-height: 20px; }
.forecast {
  display: grid;
  grid-template-columns: 260px 265px 272px 264px 270px 266px 257px;
  gap: 2px;
  margin: 16px 0 0 16px;
}
.day {
  display: flex;
  flex-direction: column;
  align-items: center;
  height: 320px;
  background: #4d98e9;
  color: #fff;
}
.date { margin-top: 15px; line-height: 26px; }
.weather { flex: none; margin: 19px 0 46px; }
.temp { line-height: 26px; margin-bottom: 22px; }
.scrollbar {
  display: flex;
  flex-direction: column;
  align-items: center;
  width: 22px;
  height: 878px;
  padding: 9px 1px 8px 2px;
  background: #f1f1f1;
}
.thumb { width: 100%; height: 788px; margin: 22px 0 auto; background: #c1c1c1; }
.taskbar { height: 8px; background: linear-gradient(90deg, #27221e, #2b1c16 30%, #28211c 65%, #241f1f); }
.taskbar i { display: block; width: 48px; height: 3px; margin-left: 1350px; border-radius: 4px 4px 0 0; background: #3c3635; transform: translateY(5px); }
</style>
